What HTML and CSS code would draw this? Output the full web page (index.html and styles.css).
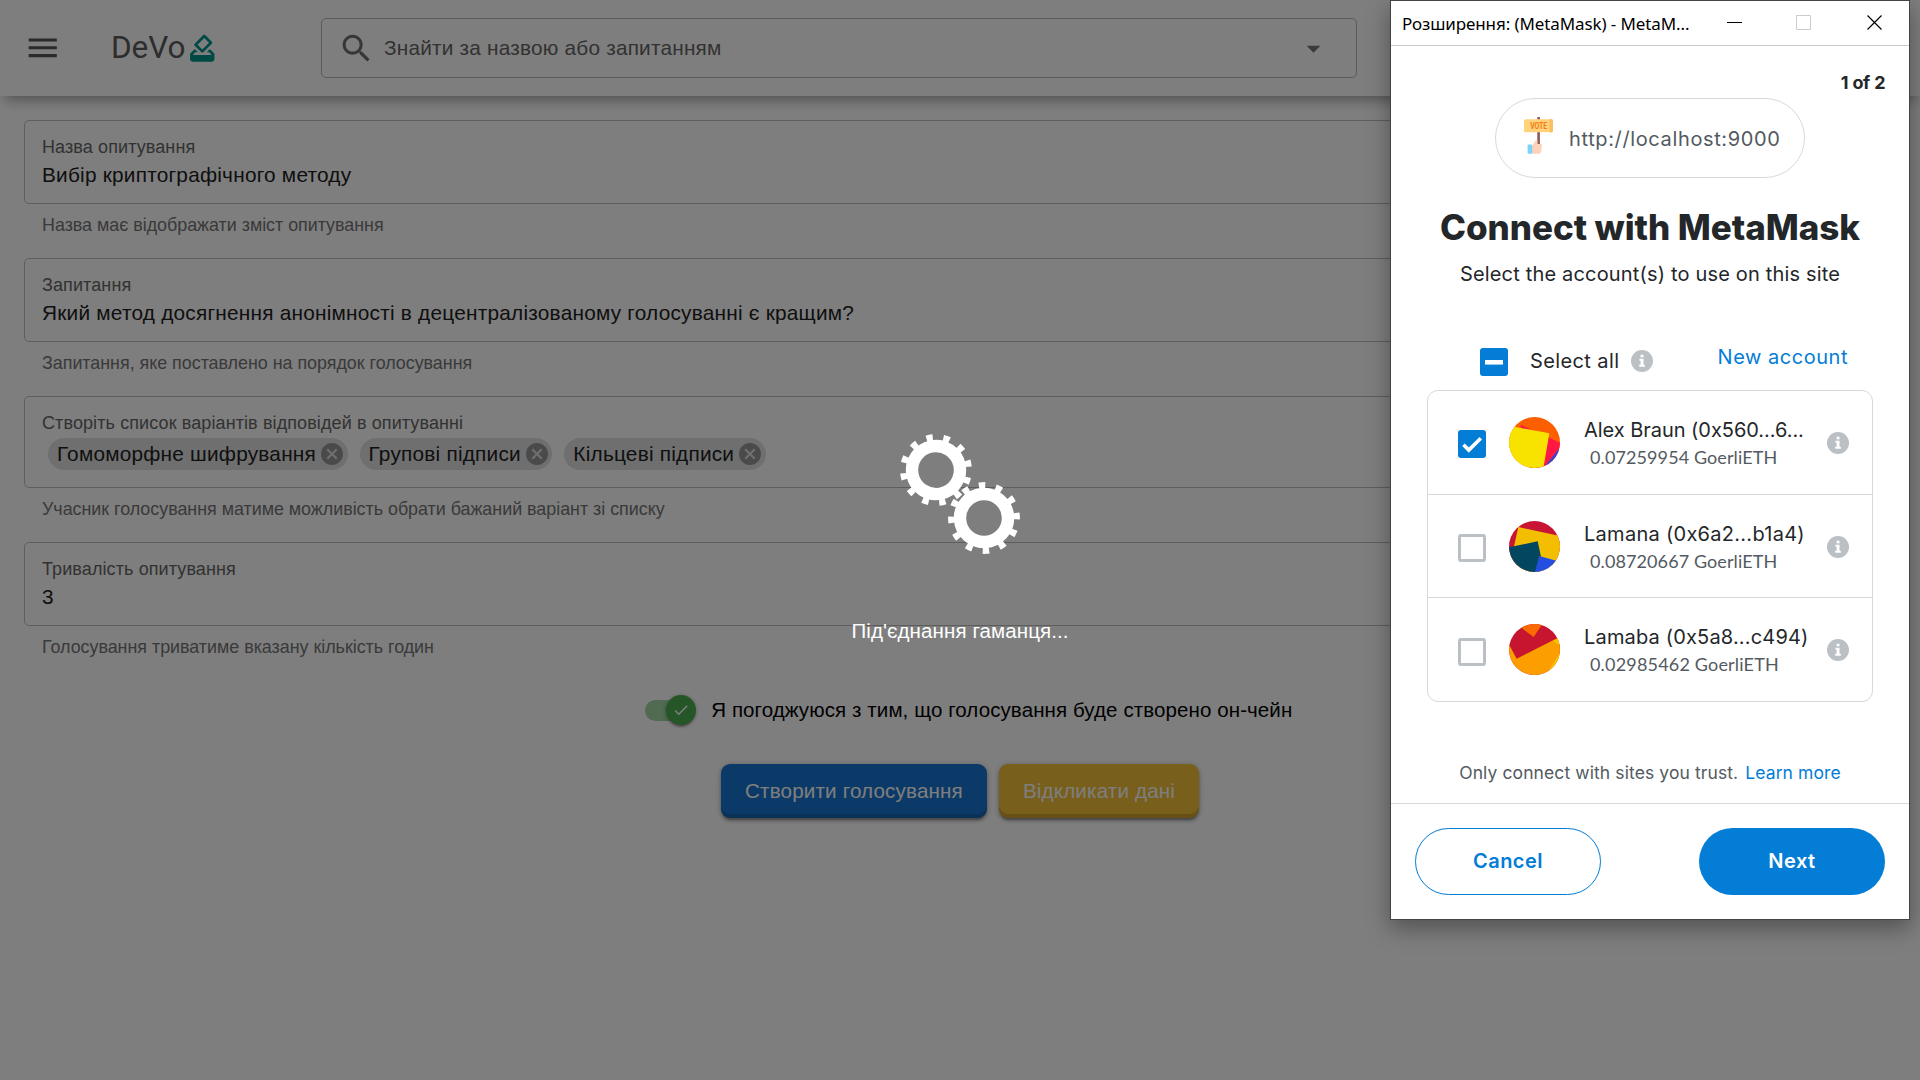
FILE: index.html
```html
<!DOCTYPE html>
<html lang="uk">
<head>
<meta charset="utf-8">
<title>DeVo</title>
<link rel="stylesheet" href="styles.css">
</head>
<body>
<svg class="defs" width="0" height="0" aria-hidden="true">
  <symbol id="i-info" viewBox="0 0 22 22"><circle cx="11" cy="11" r="11" fill="#bbc0c5"/><path fill="#fff" d="M9.6 4.7h2.9v2.6H9.6zM8.5 8.8h4v6h1.3v1.9H8.2v-1.9h1.4v-4.1H8.5z"/></symbol>
  <symbol id="i-cancel" viewBox="2 2 20 20"><path d="M12 2C6.47 2 2 6.47 2 12s4.47 10 10 10 10-4.47 10-10S17.53 2 12 2zm5 13.59L15.59 17 12 13.41 8.41 17 7 15.59 10.59 12 7 8.41 8.41 7 12 10.59 15.59 7 17 8.41 13.41 12 17 15.59z"/></symbol>
</svg>

<div class="page">
  <header class="header">
    <svg class="menu" viewBox="0 0 24 24"><path d="M3 18h18v-2H3v2zm0-5h18v-2H3v2zm0-7v2h18V6H3z"/></svg>
    <div class="brand">
      <span>DeVo</span>
      <svg class="ballot" viewBox="0 0 24 24"><path d="M18 13h-.68l-2 2h1.91L19 17H5l1.78-2h2.05l-2-2H6l-3 3v4c0 1.1.89 2 1.99 2H19c1.1 0 2-.89 2-2v-4l-3-3zm-1-5.05l-4.95 4.95-3.54-3.54 4.95-4.95L17 7.95zm-4.24-5.66L6.39 8.66c-.39.39-.39 1.02 0 1.41l4.95 4.95c.39.39 1.02.39 1.41 0l6.36-6.36c.39-.39.39-1.02 0-1.41L14.16 2.3c-.38-.4-1.01-.4-1.4-.01z"/></svg>
    </div>
    <div class="search">
      <svg viewBox="0 0 24 24" class="lens"><path d="M15.5 14h-.79l-.28-.27C15.41 12.59 16 11.11 16 9.5 16 5.91 13.09 3 9.5 3S3 5.91 3 9.5 5.91 16 9.5 16c1.61 0 3.09-.59 4.23-1.57l.27.28v.79l5 4.99L20.49 19l-4.99-5zm-6 0C7.01 14 5 11.99 5 9.5S7.01 5 9.5 5 14 7.01 14 9.5 11.99 14 9.5 14z"/></svg>
      <span class="placeholder">Знайти за назвою або запитанням</span>
      <svg viewBox="0 0 24 24" class="caret"><path d="M7 10l5 5 5-5z"/></svg>
    </div>
  </header>

  <main class="form">
    <section class="field">
      <div class="box"><div class="label">Назва опитування</div><div class="value">Вибір криптографічного методу</div></div>
      <div class="hint">Назва має відображати зміст опитування</div>
    </section>
    <section class="field">
      <div class="box"><div class="label">Запитання</div><div class="value">Який метод досягнення анонімності в децентралізованому голосуванні є кращим?</div></div>
      <div class="hint">Запитання, яке поставлено на порядок голосування</div>
    </section>
    <section class="field">
      <div class="box box-chips"><div class="label">Створіть список варіантів відповідей в опитуванні</div>
        <div class="chips">
          <div class="chip"><span>Гомоморфне шифрування</span><svg><use href="#i-cancel"/></svg></div>
          <div class="chip"><span>Групові підписи</span><svg><use href="#i-cancel"/></svg></div>
          <div class="chip"><span>Кільцеві підписи</span><svg><use href="#i-cancel"/></svg></div>
        </div>
      </div>
      <div class="hint">Учасник голосування матиме можливість обрати бажаний варіант зі списку</div>
    </section>
    <section class="field">
      <div class="box"><div class="label">Тривалість опитування</div><div class="value">3</div></div>
      <div class="hint">Голосування триватиме вказану кількість годин</div>
    </section>
    <div class="agree">
      <div class="track"><div class="thumb"><svg viewBox="0 0 24 24"><path d="M9 16.17L4.83 12l-1.42 1.41L9 19 21 7l-1.41-1.41z"/></svg></div></div>
      <span>Я погоджуюся з тим, що голосування буде створено он-чейн</span>
    </div>
    <div class="actions">
      <button class="btn btn-create">Створити голосування</button>
      <button class="btn btn-revoke">Відкликати дані</button>
    </div>
  </main>
</div>

<div class="loading">
  <svg class="gears" viewBox="0 0 120 120" fill="none" stroke="#fff">
    <g transform="rotate(-11.3 36 36)"><circle cx="36" cy="36" r="24" stroke-width="12.4"/><circle cx="36" cy="36" r="32.6" stroke-width="6.6" pathLength="360" stroke-dasharray="11.4 18.6" stroke-dashoffset="5.7"/></g>
    <g transform="rotate(-3.4 84 84)"><circle cx="84" cy="84" r="24" stroke-width="12.4"/><circle cx="84" cy="84" r="32.6" stroke-width="6.6" pathLength="360" stroke-dasharray="11.4 18.6" stroke-dashoffset="5.7"/></g>
  </svg>
  <div class="message">Під'єднання гаманця...</div>
</div>

<div class="window">
  <div class="titlebar">
    <span class="title">Розширення: (MetaMask) - MetaM...</span>
    <svg class="controls" viewBox="0 0 156 16" fill="none" stroke="#000" stroke-width="1"><path d="M0 7.5h15"/><path stroke="#ccc" d="M69.5.5h14v14h-14z"/><path stroke-width="1.2" d="M140.5.5l14 14M154.5.5l-14 14"/></svg>
  </div>
  <div class="popup">
    <div class="step">1 of 2</div>
    <div class="origin">
      <svg class="favicon" viewBox="0 0 29 37"><path fill="#8d5a55" d="M13.3 0h2.6v28h-2.6z"/><rect y="2.3" width="29" height="13" rx="1.5" fill="#ffd27c"/><path fill="#ffbe62" d="M25.5 2.3h2a1.5 1.5 0 0 1 1.5 1.5v10a1.5 1.5 0 0 1-1.5 1.5h-2z"/><text x="6.2" y="11.9" class="vote" textLength="17" lengthAdjust="spacingAndGlyphs">VOTE</text><path fill="#ffd3ba" d="M8 29l3.5-5.5c1.2-1 2.4 0 2 1.5l-.4 2h3.4c2 0 2 2.500.7 3 1 .8.8 2 0 2.400.6.8.4 2-.5 2.300.2 1.300-.6 2-1.800 2H8z"/><rect x="3.6" y="27.5" width="4.6" height="9.3" rx=".8" fill="#7ed3fa"/></svg>
      <span>http://localhost:9000</span>
    </div>
    <h1>Connect with MetaMask</h1>
    <p class="sub">Select the account(s) to use on this site</p>
    <div class="selectrow">
      <div class="check on"><svg viewBox="0 0 28 28"><path d="M5 14.3h18" stroke="#fff" stroke-width="4.6"/></svg></div>
      <span class="all">Select all</span>
      <svg class="info"><use href="#i-info"/></svg>
      <a class="new">New account</a>
    </div>
    <div class="list">
      <div class="row">
        <div class="check on"><svg viewBox="0 0 28 28"><path d="M5.5 14.8l5.3 5.3L22.8 8.2" fill="none" stroke="#fff" stroke-width="3.6"/></svg></div>
        <svg class="avatar" viewBox="0 0 153 153"><path fill="#fb5f00" d="M0 0h153v153H0z"/><path fill="#ff1843" d="M35 23l118 54v76H60z"/><path fill="#2549dc" d="M158 86l-58 71h60z"/><path fill="#f7e200" d="M-5 26l20 3 106 20-19 111H-5z"/></svg>
        <div class="who"><div class="name n1">Alex Braun (0x560...6...</div><div class="bal">0.07259954 GoerliETH</div></div>
        <svg class="info"><use href="#i-info"/></svg>
      </div>
      <div class="row">
        <div class="check"></div>
        <svg class="avatar" viewBox="0 0 153 153"><path fill="#c81534" d="M0 0h153v153H0z"/><path fill="#f3be00" d="M28 18l130 28v107H-2z"/><path fill="#244edf" d="M91 105l64 18v40H70z"/><path fill="#034660" d="M-5 80l91-19 10 46-5-2-16 58H-5z"/></svg>
        <div class="who"><div class="name n2">Lamana (0x6a2...b1a4)</div><div class="bal">0.08720667 GoerliETH</div></div>
        <svg class="info"><use href="#i-info"/></svg>
      </div>
      <div class="row">
        <div class="check"></div>
        <svg class="avatar" viewBox="0 0 153 153"><path fill="#c8152f" d="M0 0h153v153H0z"/><path fill="#fa6a00" d="M25 3l49 36L102-3z"/><path fill="#fc9d00" d="M23 104L160 35v120H-5V52z"/><path fill="#f7c500" d="M160 35l-28 16 28 17zM160 75l-50 80h50z"/></svg>
        <div class="who"><div class="name n3">Lamaba (0x5a8...c494)</div><div class="bal b3">0.02985462 GoerliETH</div></div>
        <svg class="info"><use href="#i-info"/></svg>
      </div>
    </div>
    <p class="trust"><span>Only connect with sites you trust.</span><a>Learn more</a></p>
  </div>
  <div class="footer">
    <button class="pill cancel">Cancel</button>
    <button class="pill next">Next</button>
  </div>
</div>
</body>
</html>
```
FILE: styles.css
```css
* { box-sizing: border-box; }
html, body { height: 100%; }
body { margin: 0; overflow: hidden; position: relative; background: #fff; font-family: "Liberation Sans", Arial, sans-serif; font-size: 20px; color: #000; }
svg { display: block; flex: none; }
button { font: inherit; border: 0; margin: 0; padding: 0; }
h1, p { margin: 0; }
.defs { position: absolute; }

.page { height: 1080px; }
.header { position: relative; height: 96px; display: flex; align-items: center; padding-left: 24px; box-shadow: 0 9px 13px -5px rgba(0,0,0,.36); color: #666; background: #fff; }
.menu { width: 37.5px; height: 37.5px; fill: #555; }
.brand { display: flex; align-items: center; margin-left: 49.5px; width: 210px; font: 400 31.5px/40px Roboto, sans-serif; letter-spacing: -.1px; color: #5c5c5c; }
.ballot { width: 32.5px; height: 32.5px; margin-left: .5px; fill: #009688; }
.search { width: 1036px; height: 60px; border: 1px solid #b8b8b8; border-radius: 5px; display: flex; align-items: center; padding: 0 26px 0 16px; font-size: 20.8px; letter-spacing: .2px; color: #666; }
.lens { width: 37px; height: 37px; fill: #707070; }
.placeholder { flex: 1; margin-left: 9px; line-height: 30px; }
.caret { width: 33px; height: 33px; fill: #757575; }

.form { padding: 24px 24px 0; }
.field { margin-bottom: 21px; }
.box { height: 84px; border: 1px solid #bfbfbf; border-radius: 5px; padding: 14px 17px; }
.box-chips { height: 92px; }
.label, .hint { font-size: 18px; line-height: 24px; letter-spacing: .1px; color: #666; }
.hint { margin: 9px 0 0 18px; font-size: 17.9px; letter-spacing: -.02px; color: #757575; }
.value { font-size: 20.8px; line-height: 31px; letter-spacing: .23px; color: #212121; }
.chips { display: flex; gap: 12px; margin: 3px 0 0 6px; }
.chip { display: flex; align-items: center; height: 32px; padding: 0 4.5px 0 9px; border-radius: 16px; background: #e0e0e0; color: #212121; font-size: 20.8px; letter-spacing: .22px; }
.chip svg { width: 22px; height: 22px; margin-left: 5px; fill: #979797; }

.agree { display: flex; justify-content: center; align-items: center; height: 30px; margin-top: 36px; padding-left: 17px; font-size: 20.5px; letter-spacing: .1px; }
.track { width: 46px; height: 21px; border-radius: 11px; background: #a5d7a7; margin-right: 20.5px; display: flex; align-items: center; padding-left: 21px; }
.thumb { flex: none; width: 30px; height: 30px; border-radius: 50%; background: #4caf50; display: flex; align-items: center; justify-content: center; box-shadow: 0 4px 2px -2px rgba(0,0,0,.2), 0 1px 1px rgba(0,0,0,.14), 0 1px 4px rgba(0,0,0,.3); }
.thumb svg { width: 18px; height: 18px; fill: #fff; }
.actions { display: flex; justify-content: center; gap: 12px; margin-top: 39px; }
.btn { height: 54px; border-radius: 9px; color: #fff; font-size: 20.6px; letter-spacing: .17px; box-shadow: inset 0 -4px 0 rgba(0,0,0,.15), 0 1px 6px rgba(0,0,0,.25), 0 3px 3px rgba(0,0,0,.2), 0 4px 1px -2px rgba(0,0,0,.15); }
.btn-create { width: 266px; background: #1976d2; }
.btn-revoke { width: 200px; background: #f2c037; }

.loading { position: absolute; inset: 0; background: rgba(0,0,0,.505); display: flex; flex-direction: column; align-items: center; justify-content: center; gap: 62px; color: #fff; font-size: 20.5px; letter-spacing: .1px; }
.gears { width: 120px; height: 120px; }
.message { line-height: 30px; }

.window { position: absolute; left: 1390px; top: 0; width: 520px; height: 920px; border: 1px solid #434343; background: #fff; display: flex; flex-direction: column; font-family: Inter, sans-serif; color: #24272a; box-shadow: 0 8px 22px rgba(0,0,0,.36); }
.titlebar { height: 45px; border-bottom: 1px solid #ccc; display: flex; align-items: center; padding-left: 11px; font: 17px "Noto Sans", sans-serif; letter-spacing: -.1px; color: #000; }
.title { width: 325px; }
.controls { width: 156px; height: 16px; }
.popup { flex: 1; display: flex; flex-direction: column; padding: 21px 36px 0; }
.step { font-weight: 700; font-size: 18px; line-height: 31px; text-align: right; margin-right: -12px; letter-spacing: -.6px; word-spacing: 1px; }
.origin { align-self: center; width: 310px; height: 80px; border: 1px solid #d6d9dc; border-radius: 40px; display: flex; align-items: center; padding-left: 28px; letter-spacing: .63px; color: #535a61; }
.origin span { padding-top: 1px; }
.favicon { width: 29px; height: 37px; margin: 0 16px 5px 0; }
.vote { font: 700 9px Roboto, sans-serif; letter-spacing: 0; fill: #f07c12; }
h1 { font-size: 35px; font-weight: 800; line-height: 44px; margin-top: 27px; text-align: center; letter-spacing: -.05px; white-space: nowrap; }
.sub { line-height: 30px; margin-top: 10px; text-align: center; letter-spacing: .17px; }
.selectrow { display: flex; align-items: center; height: 32px; margin-top: 57px; padding: 0 25px 0 53px; }
.check { flex: none; width: 28px; height: 28px; border: 3px solid #bbc0c5; border-radius: 3px; }
.check.on { border: 0; background: #037dd6; }
.all { margin: 0 12px 2px 22px; letter-spacing: .39px; }
.info { width: 22px; height: 22px; }
.selectrow .info { margin-bottom: 2px; }
.new { margin: 0 0 10px auto; letter-spacing: .53px; color: #037dd6; }
.list { height: 312px; margin-top: 12px; border: 1px solid #d6d9dc; border-radius: 11px; display: flex; flex-direction: column; }
.row { flex: 1; display: flex; align-items: center; padding: 0 23px 0 30px; border-bottom: 1px solid #d6d9dc; }
.row:last-child { border-bottom: 0; }
.row .check { margin-top: 4px; }
.row .info { margin-top: 1px; }
.avatar { width: 51px; height: 51px; border-radius: 50%; margin: 0 24px 0 23px; }
.who { flex: 1; white-space: nowrap; padding-top: 2px; }
.name { line-height: 28px; }
.n1 { letter-spacing: -.04px; }
.n2 { letter-spacing: .28px; }
.n3 { letter-spacing: .17px; }
.bal { font: 18px/27px Lato, sans-serif; letter-spacing: .1px; padding-left: 6px; color: #535a61; }
.b3 { letter-spacing: .18px; }
.trust { display: flex; justify-content: center; gap: 7px; margin: auto 0 18px; font-size: 17.5px; line-height: 24px; letter-spacing: .1px; color: #535a61; }
.trust a { color: #037dd6; }
.footer { height: 116px; border-top: 1px solid #d6d9dc; padding: 24px 24px 0; display: flex; justify-content: space-between; }
.pill { width: 186px; height: 67px; border-radius: 34px; font-weight: 600; letter-spacing: .5px; padding-bottom: 2px; }
.cancel { border: 1px solid #037dd6; background: #fff; color: #037dd6; }
.next { background: #037dd6; color: #fff; }
```
